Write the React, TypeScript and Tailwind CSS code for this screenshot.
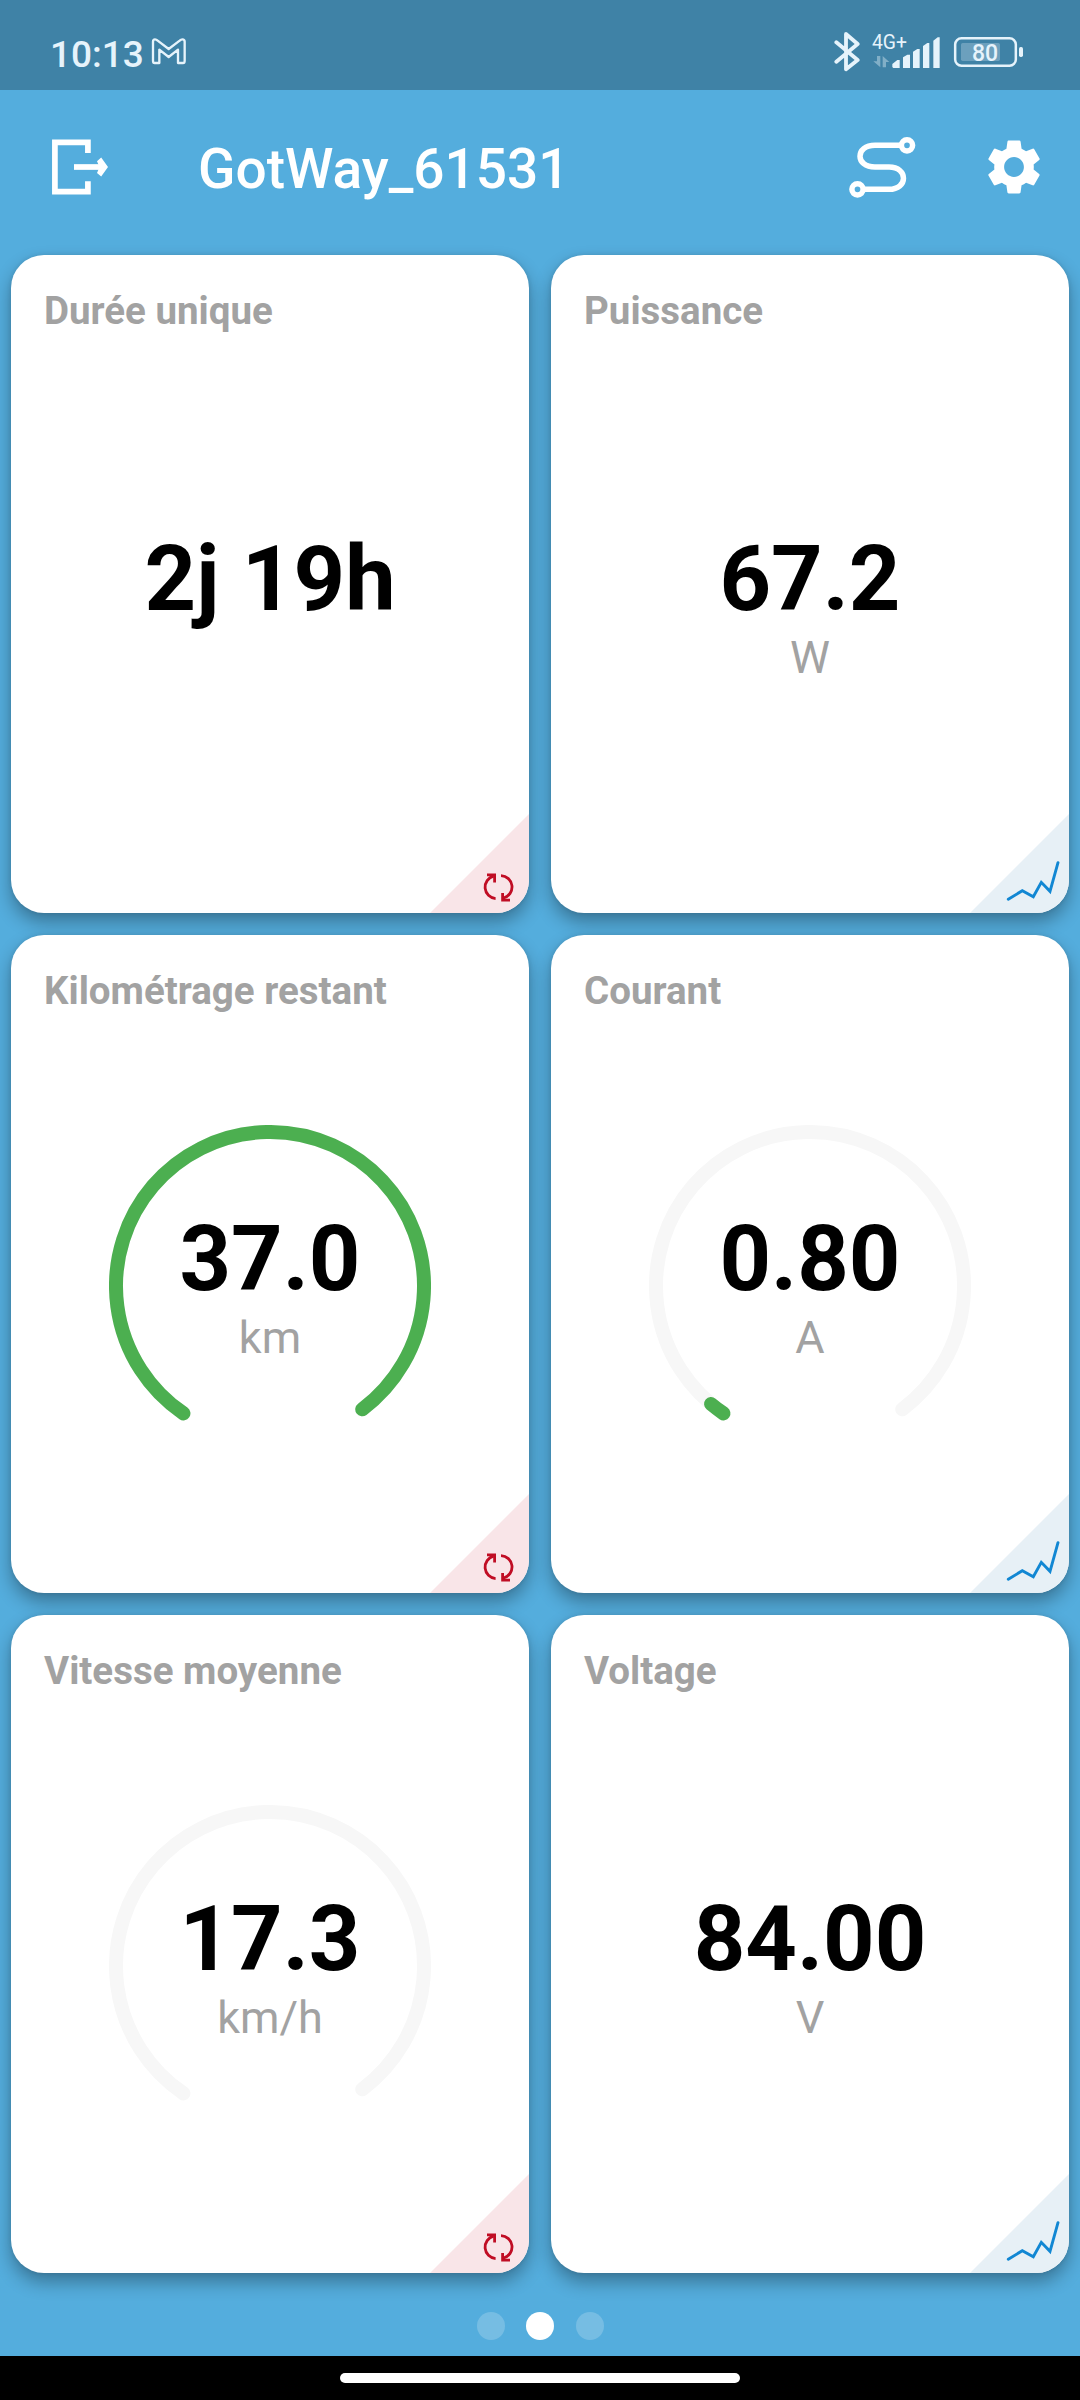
import type { ReactNode } from "react";
import { MdSettings } from "react-icons/md";
import clsx from "clsx";

type Tile = {
  title: string;
  value: string;
  unit?: string;
  kind: "reset" | "chart";
  // 0..1, no gauge is drawn when it is missing
  gauge?: number;
};

const tiles: Tile[] = [
  { title: "Durée unique", value: "2j 19h", kind: "reset" },
  { title: "Puissance", value: "67.2", unit: "W", kind: "chart" },
  { title: "Kilométrage restant", value: "37.0", unit: "km", kind: "reset", gauge: 1 },
  { title: "Courant", value: "0.80", unit: "A", kind: "chart", gauge: 0.02 },
  { title: "Vitesse moyenne", value: "17.3", unit: "km/h", kind: "reset", gauge: 0 },
  { title: "Voltage", value: "84.00", unit: "V", kind: "chart" },
];

const START = 124.2;
const SWEEP = 289;
const RADIUS = 154;
const CENTER = 161;

function arc(fraction: number) {
  const point = (deg: number) => {
    const rad = (deg * Math.PI) / 180;
    return `${CENTER + RADIUS * Math.cos(rad)} ${CENTER + RADIUS * Math.sin(rad)}`;
  };
  const sweep = SWEEP * fraction;
  return `M${point(START)} A${RADIUS} ${RADIUS} 0 ${sweep > 180 ? 1 : 0} 1 ${point(START + sweep)}`;
}

const Gauge = ({ value }: { value: number }) => (
  <svg
    className="absolute inset-0"
    width="322"
    height="322"
    viewBox="0 0 322 322"
    fill="none"
    strokeWidth="14"
    strokeLinecap="round"
  >
    <path d={arc(1)} stroke="#f7f7f7" />
    {value > 0 && <path d={arc(value)} stroke="#4caf50" />}
  </svg>
);

const Corner = ({ kind }: { kind: Tile["kind"] }) => (
  <svg
    className="absolute right-0 bottom-0"
    width="99"
    height="99"
    viewBox="0 0 99 99"
    fill="none"
  >
    {kind === "reset" ? (
      <>
        <path d="M0 99L99 0V99Z" fill="#f9e5e8" />
        <g stroke="#c00d24" strokeWidth="2.8">
          <path d="M65.6 84.6A11.4 11.4 0 0 1 63.6 62.2" />
          <path d="M57 60.8H64.6V68.6" />
          <path d="M71 61.6A11.4 11.4 0 0 1 73.6 84" />
          <path d="M80 86.2H72.6V79" />
        </g>
      </>
    ) : (
      <>
        <path d="M0 99L99 0V99Z" fill="#e7f0f6" />
        <path
          d="M38.3 85.3L52.3 76.7L63.3 82.7L71.3 68.3L80 77.3L88 48.7"
          stroke="#1287d3"
          strokeWidth="2.9"
          strokeLinecap="round"
        />
      </>
    )}
  </svg>
);

const Card = ({ tile }: { tile: Tile }) => (
  <div className="relative flex h-[658px] flex-col rounded-[33px] bg-white pt-[33px] shadow-[0_9px_18px_0_rgba(0,0,0,0.32),0_0_4px_0_rgba(0,0,0,0.1)]">
    <div className="px-[33px] text-[38.5px] leading-[45px] font-bold text-[#a2a2a2]">
      {tile.title}
    </div>
    <div className="flex flex-1 items-center justify-center pb-[34px]">
      <div className="relative flex h-[322px] w-[322px] flex-col items-center justify-center">
        {tile.gauge !== undefined && <Gauge value={tile.gauge} />}
        <div className="relative text-[90px] leading-[104px] font-bold whitespace-nowrap text-black">
          {tile.value}
        </div>
        <div className="relative h-[52px] text-[45px] leading-[52px] text-[#a2a2a2]">
          {tile.unit}
        </div>
      </div>
    </div>
    <div className="absolute right-0 bottom-0 h-[99px] w-[99px] overflow-hidden rounded-br-[33px]">
      <Corner kind={tile.kind} />
    </div>
  </div>
);

const StatusIcon = ({
  width,
  viewBox,
  className,
  children,
}: {
  width: number;
  viewBox: string;
  className?: string;
  children: ReactNode;
}) => (
  <svg width={width} height="42" viewBox={viewBox} className={className} fill="none">
    {children}
  </svg>
);

const StatusBar = () => (
  <div className="flex h-[90px] items-start bg-[#3f82a6] pt-[30px] pr-[56px] pl-[50px] text-[#e6f3fb]">
    <div className="w-[95px] pt-px text-[37px] leading-[48px] font-medium">10:13</div>
    <StatusIcon width={40} viewBox="0 0 120 126" className="ml-[5px]">
      <path
        d="M9 35Q9 28 15 28Q19 28 23 32L56 57L89 32Q93 28 97 28Q104 28 104 35V92Q104 99 99 99H84V59L56 81L28 59V99H14Q9 99 9 92Z"
        stroke="currentColor"
        strokeWidth="7"
        strokeLinejoin="round"
      />
    </StatusIcon>
    <div className="flex-1" />
    <StatusIcon width={30} viewBox="39 90 90 126">
      <path
        d="M49 127L113 180L78 208V102L113 132L49 185"
        stroke="currentColor"
        strokeWidth="11.5"
        strokeLinecap="round"
        strokeLinejoin="round"
      />
    </StatusIcon>
    <StatusIcon width={72} viewBox="150 90 216 126" className="ml-[7px]">
      <text x="156" y="147" fontSize="58" fill="currentColor">
        4G+
      </text>
      <g fill="currentColor">
        <path d="M171 168H181V202L160 184H171Z" opacity="0.4" />
        <path d="M188 202V168L208 186H198V202Z" opacity="0.4" />
        <path d="M217 201V192L232 180H239V204H220Z" />
        <path d="M249 204V172L262 164H270V204Z" />
        <path d="M279 204V155L292 147H299V204Z" />
        <path d="M309 204V138L322 129H328V204Z" />
        <path d="M340 204V122L353 112H359V204Z" />
      </g>
    </StatusIcon>
    <StatusIcon width={72} viewBox="396 90 216 126" className="ml-[10px]">
      <rect x="405.5" y="114.5" width="182" height="83" rx="19" stroke="currentColor" strokeWidth="7.5" />
      <rect x="423" y="129" width="117" height="54" rx="5" fill="currentColor" opacity="0.27" />
      <rect x="597" y="141" width="12" height="30" rx="5" fill="currentColor" />
      <text x="495" y="183" fontSize="69" fontWeight="500" fill="currentColor" textAnchor="middle">
        80
      </text>
    </StatusIcon>
  </div>
);

const Header = () => (
  <div className="flex h-[165px] items-center pr-[33px] pb-[11px] pl-[52px] text-white">
    <svg width="56" height="56" viewBox="0 0 56 56" fill="none">
      <path d="M35.9 14V3.4H2.9V52.6H35.9V42.3" stroke="currentColor" strokeWidth="5.7" />
      <path d="M22 28H49" stroke="currentColor" strokeWidth="5.7" />
      <path d="M45 22.3L49.2 18.5L56 28L49.2 37.5L45 34L47.5 28Z" fill="currentColor" />
    </svg>
    <h1 className="ml-[90px] flex-1 pt-1 text-[55px] leading-[64px] font-medium">GotWay_61531</h1>
    <svg width="68" height="66" viewBox="0 0 68 66" fill="none" stroke="currentColor" strokeWidth="5.5">
      <path d="M53 11.3H27C7 11.3 7 33 27 33H41C60.3 33 60.3 55.3 41 55.3H14" />
      <circle cx="59" cy="11.3" r="5.6" />
      <circle cx="9.5" cy="55.3" r="5.6" />
    </svg>
    <MdSettings className="ml-[65px] h-[66px] w-[66px]" />
  </div>
);

const App = () => {
  const page = 1;

  return (
    <div className="flex h-[2400px] w-[1080px] flex-col overflow-hidden bg-[#54addd] font-[Roboto,sans-serif]">
      <StatusBar />
      <Header />
      <div className="grid grid-cols-2 gap-[22px] px-[11px]">
        {tiles.map((tile) => (
          <Card key={tile.title} tile={tile} />
        ))}
      </div>
      <div className="flex flex-1 items-center justify-center gap-[21.5px] pt-[23px]">
        {[0, 1, 2].map((i) => (
          <div
            key={i}
            className={clsx("h-7 w-7 rounded-full", i === page ? "bg-white" : "bg-white/20")}
          />
        ))}
      </div>
      <div className="flex h-[44px] justify-center bg-black pt-[17px]">
        <div className="h-[10px] w-[400px] rounded-full bg-white" />
      </div>
    </div>
  );
};

export default App;
